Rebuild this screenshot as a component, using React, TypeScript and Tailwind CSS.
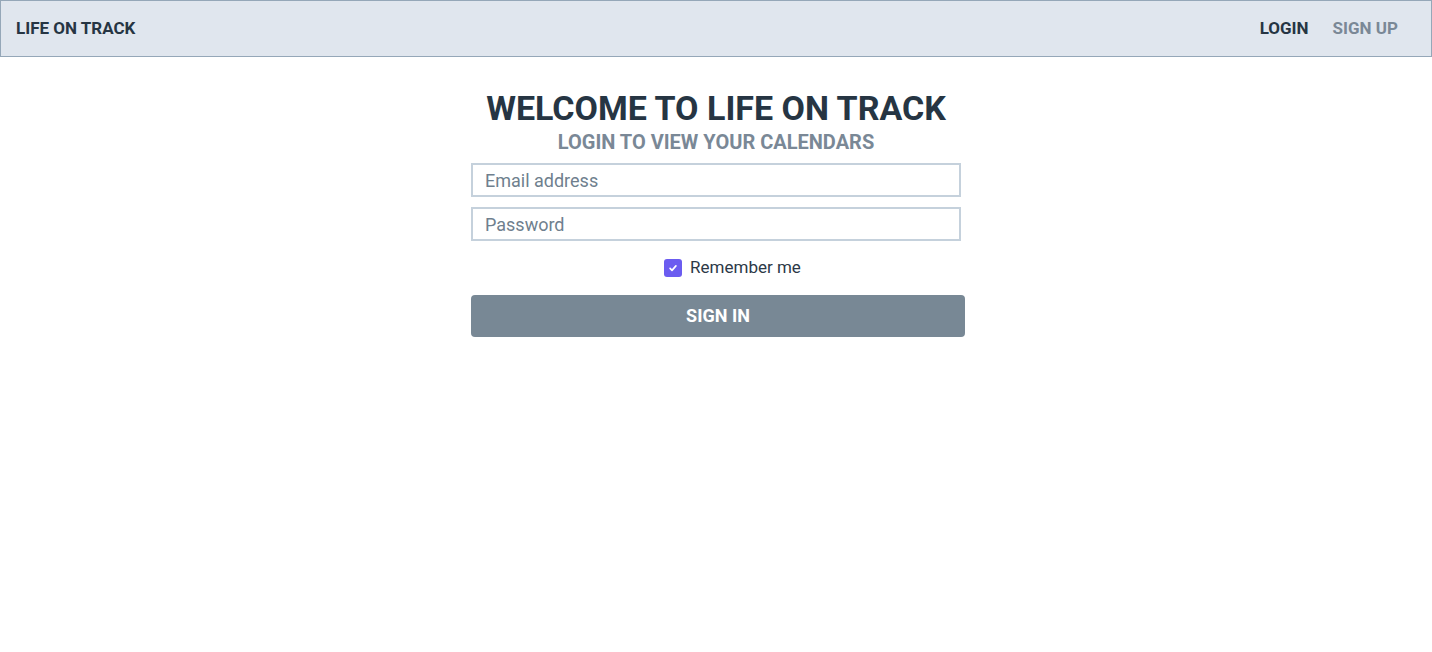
export default function App() {
  return (
    <div className="min-h-screen bg-white" style={{ fontFamily: "Roboto, 'Noto Sans', sans-serif" }}>
      <nav className="flex h-[57px] items-center justify-between border border-[#95a7b8] bg-[#e0e6ee] pl-[15px] pr-[33px]">
        <span className="text-[17px] font-bold text-[#263543]">LIFE ON TRACK</span>
        <div className="flex items-center gap-6 text-[17px] font-bold">
          <a className="text-[#263543]">LOGIN</a>
          <a className="text-[#7a8896]">SIGN UP</a>
        </div>
      </nav>

      <main className="mx-auto flex w-[490px] flex-col items-center pt-[29px]">
        <h1 className="whitespace-nowrap text-[34px] leading-[44px] font-bold text-[#263543]">WELCOME TO LIFE ON TRACK</h1>
        <h2 className="whitespace-nowrap text-[20px] leading-[24px] font-bold text-[#7a8896]">LOGIN TO VIEW YOUR CALENDARS</h2>

        <form className="mt-[9px] flex w-full flex-col">
          <input
            type="email"
            placeholder="Email address"
            className="h-[34px] w-[490px] border-2 border-[#c5d1dc] px-3 text-[18px] text-[#263543] placeholder:text-[#6f7f8e] outline-none"
          />
          <input
            type="password"
            placeholder="Password"
            className="mt-[10px] h-[34px] w-[490px] border-2 border-[#c5d1dc] px-3 text-[18px] text-[#263543] placeholder:text-[#6f7f8e] outline-none"
          />
          <label className="mt-[14px] flex items-center justify-center gap-[8px] pl-[33px] text-[17px] text-[#2c3947]">
            <span className="flex h-[18px] w-[18px] items-center justify-center rounded-[3px] bg-[#6b5cf0]">
              <svg viewBox="0 0 12 12" className="h-[10px] w-[10px]" fill="none" stroke="white" strokeWidth="2" strokeLinecap="round" strokeLinejoin="round">
                <path d="M2.5 6.5l2.3 2.3L9.5 3.5" />
              </svg>
            </span>
            Remember me
          </label>
          <button
            type="button"
            className="mt-[14px] h-[42px] w-[494px] shrink-0 rounded-[4px] bg-[#788895] text-[18px] font-bold text-white"
          >
            SIGN IN
          </button>
        </form>
      </main>
    </div>
  );
}
